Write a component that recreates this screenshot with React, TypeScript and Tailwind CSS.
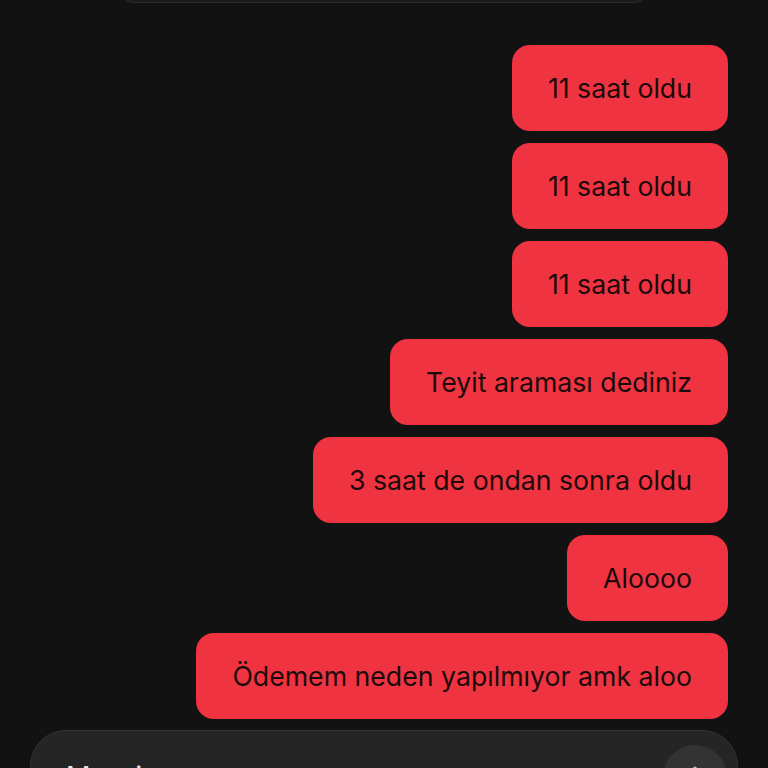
import { ArrowUp } from "lucide-react";

const messages = [
  "11 saat oldu",
  "11 saat oldu",
  "11 saat oldu",
  "Teyit araması dediniz",
  "3 saat de ondan sonra oldu",
  "Aloooo",
  "Ödemem neden yapılmıyor amk aloo",
];

function Bubble({ text }: { text: string }) {
  return (
    <div className="flex justify-end">
      <div className="rounded-[18px] bg-[#ef3340] px-[36px] py-[27px] text-[26.7px] leading-[32px] text-[#1c0a0b]">
        {text}
      </div>
    </div>
  );
}

export default function App() {
  return (
    <div
      className="flex h-[768px] w-[768px] flex-col overflow-hidden bg-[#121212]"
      style={{ fontFamily: "Inter, 'Noto Sans', sans-serif" }}
    >
      {/* cut-off element at the top */}
      <div className="mx-auto -mt-[41px] h-[43px] w-[530px] shrink-0 rounded-b-[14px] bg-[#1b1b1b] shadow-[0_1px_0_#2c2c2c]" />

      <div className="mt-[43px] flex flex-col gap-[12px] pr-[40px]">
        {messages.map((m, i) => (
          <Bubble key={i} text={m} />
        ))}
      </div>

      <div className="mx-[30px] mt-[11px] flex h-[90px] shrink-0 items-start justify-between rounded-[36px] border border-[#333] bg-[#252525] pl-[35px] pr-[10px] pt-[14px]">
        <span className="pt-[16px] text-[27px] leading-[32px] text-[#e5e5e5]">
          Mesaj...
        </span>
        <div className="flex h-[64px] w-[64px] items-center justify-center rounded-full bg-[#333]">
          <ArrowUp className="h-[30px] w-[30px] text-[#bbb]" strokeWidth={2.5} />
        </div>
      </div>
    </div>
  );
}
